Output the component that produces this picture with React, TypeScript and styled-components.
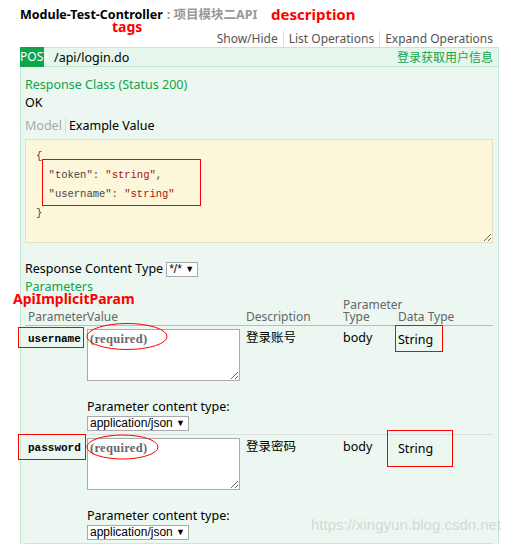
import styled, { createGlobalStyle } from "styled-components";

const GlobalStyle = createGlobalStyle`
  html, body {
    margin: 0;
    padding: 0;
    background: #ffffff;
  }
  body {
    font-family: "Noto Sans", "Noto Sans CJK SC", sans-serif;
    font-size: 12px;
    color: #000;
  }
`;

const GREEN = "#10a54a";

const Page = styled.div`
  position: relative;
  width: 523px;
  height: 544px;
  overflow: hidden;
  padding: 6px 0 0 20px;
  box-sizing: border-box;
`;

const TitleRow = styled.div`
  display: flex;
  align-items: baseline;
  height: 18px;
  line-height: 18px;
`;

const Title = styled.span`
  font-weight: bold;
  font-size: 12.5px;
  color: #000;
`;

const TitleDesc = styled.span`
  font-weight: bold;
  font-size: 12.5px;
  color: #999;
  margin-left: 4px;
`;

const Toolbar = styled.div`
  display: flex;
  justify-content: flex-end;
  width: 473px;
  margin-top: 7px;
  height: 16px;
  line-height: 16px;
`;

const ToolLink = styled.span<{ $last?: boolean }>`
  color: #555;
  font-size: 12px;
  padding: 0 5px;
  border-right: ${(p) => (p.$last ? "none" : "1px solid #ddd")};
  padding-right: ${(p) => (p.$last ? "0" : "5px")};
`;

const Operation = styled.div`
  width: 479px;
  box-sizing: border-box;
`;

const Heading = styled.div`
  display: flex;
  align-items: center;
  height: 20px;
  background: #e7f6ec;
  border: 1px solid #c3e8d1;
  border-left: none;
  box-sizing: border-box;
  padding-right: 5px;
`;

const Method = styled.span`
  position: relative;
  background: ${GREEN};
  color: #fff;
  width: 24px;
  height: 20px;
  line-height: 20px;
  white-space: nowrap;
  font-size: 12px;
`;

const Path = styled.span`
  margin-left: 10px;
  color: #000;
  font-size: 12.5px;
  flex: 1;
`;

const Summary = styled.span`
  color: ${GREEN};
  font-size: 12px;
`;

const Content = styled.div`
  background: #ebf7f0;
  border: 1px solid #c3e8d1;
  border-top: none;
  padding: 9px 5px 40px 4px;
  height: 520px;
`;

const GreenTitle = styled.div`
  color: ${GREEN};
  font-size: 12.5px;
  line-height: 18px;
`;

const Plain = styled.div`
  font-size: 12.5px;
  line-height: 18px;
`;

const Tabs = styled.div`
  display: flex;
  margin-top: 5px;
  line-height: 18px;
  font-size: 12.5px;
`;

const Tab = styled.span<{ $active?: boolean }>`
  color: ${(p) => (p.$active ? "#000" : "#aaa")};
  padding-right: ${(p) => (p.$active ? "0" : "3px")};
  padding-left: ${(p) => (p.$active ? "3px" : "0")};
  border-right: ${(p) => (p.$active ? "none" : "1px solid #ddd")};
`;

const Snippet = styled.div`
  margin-top: 4px;
  height: 104px;
  box-sizing: border-box;
  background: #fcf6db;
  border: 1px solid #e5e0c6;
  padding: 7px 10px;
  overflow: auto;
  resize: both;
  font-family: "Liberation Mono", "DejaVu Sans Mono", monospace;
  font-size: 10.5px;
  line-height: 19px;
  color: #444;
  white-space: pre;
`;

const StrVal = styled.span`
  color: #a11;
`;

const ContentTypeRow = styled.div`
  display: flex;
  align-items: center;
  margin-top: 17px;
  font-size: 12.5px;
  line-height: 18px;
`;

const FakeSelect = styled.span<{ $w: number; $flush?: boolean }>`
  display: inline-flex;
  justify-content: space-between;
  align-items: center;
  width: ${(p) => p.$w}px;
  height: 15px;
  box-sizing: border-box;
  background: #fff;
  border: 1px solid #a9a9a9;
  padding: 0 3px 0 2px;
  font-family: "Liberation Sans", Arial, sans-serif;
  font-size: 12px;
  line-height: 13px;
  color: #000;
  margin-left: ${(p) => (p.$flush ? "0" : "3px")};
`;

const Arrow = styled.span`
  font-size: 9px;
`;

const Table = styled.table`
  border-collapse: collapse;
  width: 468px;
  table-layout: fixed;
  margin-top: 3px;
`;

const Th = styled.th<{ $w?: number }>`
  width: ${(p) => (p.$w ? `${p.$w}px` : "auto")};
  font-weight: normal;
  text-align: left;
  color: #666;
  font-size: 12px;
  line-height: 12px;
  vertical-align: bottom;
  padding: 0 0 2px 0;
  border-bottom: 1px solid #bbb;
  white-space: nowrap;
  overflow: visible;
`;

const ThWrap = styled(Th)`
  white-space: normal;
`;

const HeadLabel = styled.span`
  padding-left: 3px;
`;

const Td = styled.td<{ $pt?: number }>`
  vertical-align: top;
  padding: ${(p) => p.$pt ?? 4}px 0 3px 0;
  font-size: 12.5px;
  line-height: 16px;
  border-bottom: 1px solid #ddd;
`;

const ParamName = styled.span`
  font-family: "Liberation Mono", "DejaVu Sans Mono", monospace;
  font-weight: bold;
  font-size: 11px;
  padding-left: 3px;
  line-height: 16px;
`;

const ValueArea = styled.textarea`
  display: block;
  width: 153px;
  height: 52px;
  box-sizing: border-box;
  margin: -1px 0 0 0;
  padding: 2px;
  border: 1px solid #aaa;
  background: #fff;
  resize: both;
  font-family: "Liberation Serif", serif;
  font-weight: bold;
  font-size: 12.5px;
  letter-spacing: 0.3px;
  &::placeholder {
    color: #666;
    opacity: 1;
  }
`;

const ContentTypeLabel = styled.div`
  margin-top: 18px;
  font-size: 12.5px;
  line-height: 16px;
`;

const Watermark = styled.div`
  position: absolute;
  left: 311px;
  top: 516px;
  font-family: "Liberation Sans", Arial, sans-serif;
  font-size: 15px;
  color: rgba(190, 190, 190, 0.55);
`;

const Note = styled.div<{ $x: number; $y: number; $size: number }>`
  position: absolute;
  left: ${(p) => p.$x}px;
  top: ${(p) => p.$y}px;
  color: #ff0000;
  font-weight: bold;
  font-size: ${(p) => p.$size}px;
  line-height: 1;
  font-family: "Noto Sans", sans-serif;
`;

const Marks = styled.svg`
  position: absolute;
  left: 0;
  top: 0;
  pointer-events: none;
`;

const params = [
  { name: "username", desc: "登录账号" },
  { name: "password", desc: "登录密码" },
];

export default function App() {
  return (
    <>
      <GlobalStyle />
      <Page>
        <TitleRow>
          <Title>Module-Test-Controller</Title>
          <TitleDesc>: 项目模块二API</TitleDesc>
        </TitleRow>
        <Toolbar>
          <ToolLink>Show/Hide</ToolLink>
          <ToolLink>List Operations</ToolLink>
          <ToolLink $last>Expand Operations</ToolLink>
        </Toolbar>
        <Operation>
          <Heading>
            <Method>POST</Method>
            <Path>/api/login.do</Path>
            <Summary>登录获取用户信息</Summary>
          </Heading>
          <Content>
            <GreenTitle>Response Class (Status 200)</GreenTitle>
            <Plain>OK</Plain>
            <Tabs>
              <Tab>Model</Tab>
              <Tab $active>Example Value</Tab>
            </Tabs>
            <Snippet>
              {"{\n  "}
              {'"token": '}
              <StrVal>"string"</StrVal>
              {",\n  "}
              {'"username": '}
              <StrVal>"string"</StrVal>
              {"\n}"}
            </Snippet>
            <ContentTypeRow>
              Response Content Type
              <FakeSelect $w={32}>
                */* <Arrow>▼</Arrow>
              </FakeSelect>
            </ContentTypeRow>
            <GreenTitle>Parameters</GreenTitle>
            <Table>
              <thead>
                <tr>
                  <Th $w={62}>
                    <HeadLabel>Parameter</HeadLabel>
                  </Th>
                  <Th $w={159}>Value</Th>
                  <Th $w={97}>Description</Th>
                  <ThWrap $w={55}>Parameter Type</ThWrap>
                  <Th>Data Type</Th>
                </tr>
              </thead>
              <tbody>
                {params.map((p) => (
                  <tr key={p.name}>
                    <Td>
                      <ParamName>{p.name}</ParamName>
                    </Td>
                    <Td>
                      <ValueArea placeholder="(required)" />
                      <ContentTypeLabel>Parameter content type:</ContentTypeLabel>
                      <FakeSelect $w={102} $flush>
                        application/json <Arrow>▼</Arrow>
                      </FakeSelect>
                    </Td>
                    <Td>{p.desc}</Td>
                    <Td>body</Td>
                    <Td $pt={6}>String</Td>
                  </tr>
                ))}
              </tbody>
            </Table>
          </Content>
        </Operation>
        <Watermark>https://xingyun.blog.csdn.net</Watermark>
        <Note $x={271} $y={7} $size={15}>
          description
        </Note>
        <Note $x={112} $y={20} $size={14}>
          tags
        </Note>
        <Note $x={13} $y={292} $size={14}>
          ApiImplicitParam
        </Note>
        <Marks width={523} height={544}>
          <g fill="none" stroke="#ff0000" strokeWidth={1}>
            <rect x={42.5} y={159.5} width={158} height={46} />
            <rect x={18.5} y={327.5} width={65} height={20} />
            <rect x={395.5} y={325.5} width={47} height={26} />
            <rect x={18.5} y={434.5} width={67} height={25} />
            <rect x={387.5} y={430.5} width={65} height={36} />
            <ellipse cx={127} cy={336.5} rx={40} ry={13} />
            <ellipse cx={122.5} cy={447} rx={35.5} ry={12} />
          </g>
        </Marks>
      </Page>
    </>
  );
}
